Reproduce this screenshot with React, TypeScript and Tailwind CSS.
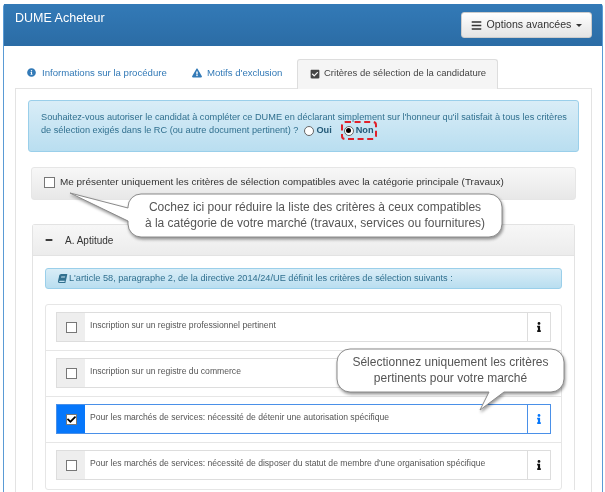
import { FaBars, FaBook, FaCheck, FaCheckSquare, FaExclamationTriangle, FaInfo, FaInfoCircle, FaMinus } from "react-icons/fa";

const criteres = [
  { label: "Inscription sur un registre professionnel pertinent", checked: false },
  { label: "Inscription sur un registre du commerce", checked: false },
  { label: "Pour les marchés de services: nécessité de détenir une autorisation spécifique", checked: true },
  { label: "Pour les marchés de services: nécessité de disposer du statut de membre d'une organisation spécifique", checked: false },
];

function CritereRow({ label, checked }: { label: string; checked: boolean }) {
  return (
    <div className="h-[46px] border-b border-[#e6e6e6] px-[10px] pt-[7px] last:border-b-0">
      <div className={`flex h-[30px] border ${checked ? "border-[#4a90e8]" : "border-[#dddddd]"}`}>
        <div className={`flex w-[28px] shrink-0 items-center justify-center ${checked ? "bg-[#0677fb]" : "bg-[#eeeeee]"}`}>
          <span className="flex h-[11px] w-[11px] items-center justify-center border border-[#777777] bg-white">
            {checked && <FaCheck className="text-[9px] text-black" />}
          </span>
        </div>
        <div className="flex-1 pb-[4px] pl-[5px] text-[8.6px] leading-[24px] text-[#555555]">{label}</div>
        <div className={`flex w-[23px] shrink-0 items-center justify-center border-l ${checked ? "border-[#4a90e8] text-[#0677fb]" : "border-[#dddddd] text-[#111111]"}`}>
          <FaInfo className="text-[10px]" />
        </div>
      </div>
    </div>
  );
}

function Callout({ className, bubble, children }: { className: string; bubble: string; children: React.ReactNode }) {
  return (
    <div className={`absolute flex flex-col items-center justify-center text-[12px] leading-[15.5px] text-[#555555] ${className}`}>
      <svg className="absolute left-0 top-0 overflow-visible" width="100%" height="100%">
        <path d={bubble} fill="#ffffff" stroke="#8a8a8a" strokeWidth="1" strokeLinejoin="round" style={{ filter: "drop-shadow(1px 2px 1.5px rgba(0,0,0,.4))" }} />
      </svg>
      <div className="relative text-center">{children}</div>
    </div>
  );
}

export default function App() {
  return (
    <div className="relative h-[492px] w-[605px] overflow-hidden bg-white pl-[3px] pr-[2px] pt-1 font-['Liberation_Sans',Arial,sans-serif] blur-[0.35px]">
      <div className="h-full rounded-t-[3px] border-x border-[#5a9bd5]">
        <div className="flex h-[42px] items-start justify-between bg-gradient-to-b from-[#337ab7] to-[#2b6ca5] pl-[11px] pr-[10px]">
          <div className="pt-[5px] text-[12.5px] leading-[18px] text-white">DUME Acheteur</div>
          <button className="mt-2 flex h-[26px] w-[131px] items-center justify-center gap-[5px] rounded-[3px] border border-[#cccccc] bg-gradient-to-b from-white to-[#e4e4e4] text-[10.6px] text-[#333333]">
            <FaBars className="text-[11px]" />
            <span>Options avancées</span>
            <span className="mt-[1px] h-0 w-0 border-x-[3px] border-t-[3px] border-x-transparent border-t-[#333333]" />
          </button>
        </div>

        <div className="pl-[11px] pr-[10px] pt-3">
          <div className="flex h-[30px] items-center whitespace-nowrap text-[9.6px] text-[#337ab7]">
            <div className="flex w-[167px] items-center gap-[6px] pl-3">
              <FaInfoCircle className="text-[9px]" /> Informations sur la procédure
            </div>
            <div className="flex w-[115px] items-center gap-[5px] pl-[10px]">
              <FaExclamationTriangle className="text-[10px]" /> Motifs d'exclusion
            </div>
            <div className="flex h-[30px] w-[201px] translate-y-[1px] items-center gap-1 rounded-t-[3px] border-x border-t border-[#dddddd] bg-[#f5f5f5] pb-[2px] pl-3 text-[9.5px] text-[#444444]">
              <FaCheckSquare className="text-[10px]" /> Critères de sélection de la candidature
            </div>
          </div>

          <div className="h-[420px] border-x border-t border-[#e3e3e3] pt-[11px]">
            <div className="mx-3 h-[52px] rounded-[3px] border border-[#9acfea] bg-gradient-to-b from-[#d9edf7] to-[#b9def0] px-3 pt-[10px] text-[9.2px] leading-[13px] text-[#31708f]">
              <div className="whitespace-nowrap">Souhaitez-vous autoriser le candidat à compléter ce DUME en déclarant simplement sur l'honneur qu'il satisfait à tous les critères</div>
              <div className="flex h-[13px] items-center whitespace-nowrap">
                <span>de sélection exigés dans le RC (ou autre document pertinent) ?</span>
                <span className="ml-[6px] h-[10px] w-[10px] rounded-full border border-[#666666] bg-white" />
                <b className="ml-[2px] text-[#245a78]">Oui</b>
                <span className="ml-[9px] flex h-[19px] items-center rounded-[4px] border-2 border-dashed border-[#e0202a] px-[1px]">
                  <span className="flex h-[10px] w-[10px] items-center justify-center rounded-full border border-[#666666] bg-white">
                    <span className="h-[5px] w-[5px] rounded-full bg-black" />
                  </span>
                  <b className="ml-[2px] text-[#245a78]">Non</b>
                </span>
              </div>
            </div>

            <div className="mx-[15px] mt-[15px] flex h-[33px] items-center gap-[5px] rounded-[3px] border border-[#e6e6e6] bg-gradient-to-b from-[#f7f7f7] to-[#e8e8e8] pb-[3px] pl-3 text-[9.95px] text-[#333333]">
              <span className="h-[11px] w-[11px] border border-[#777777] bg-white" />
              Me présenter uniquement les critères de sélection compatibles avec la catégorie principale (Travaux)
            </div>

            <div className="mx-4 mt-6 rounded-t-[3px] border-x border-t border-[#e3e3e3]">
              <div className="flex h-[31px] items-center border-b border-[#e3e3e3] bg-gradient-to-b from-[#f7f7f7] to-[#ececec] pl-3 text-[10px] text-[#333333]">
                <FaMinus className="w-[8px] text-[8px] text-black" />
                <span className="ml-[12px]">A. Aptitude</span>
              </div>
              <div className="px-3 pt-3">
                <div className="flex h-[21px] items-center gap-[2px] rounded-[3px] border border-[#9acfea] bg-gradient-to-b from-[#d9edf7] to-[#b9def0] pl-[12px] text-[9.2px] text-[#31708f]">
                  <FaBook className="h-[9px] w-[9px] -skew-x-12" />
                  L'article 58, paragraphe 2, de la directive 2014/24/UE définit les critères de sélection suivants :
                </div>
                <div className="mt-[15px] rounded-[3px] border border-[#e6e6e6]">
                  {criteres.map((c) => (
                    <CritereRow key={c.label} label={c.label} checked={c.checked} />
                  ))}
                </div>
              </div>
            </div>
          </div>
        </div>
      </div>

      <Callout
        className="left-[128px] top-[194px] h-[43px] w-[374px]"
        bubble="M13 0 H361 A13 13 0 0 1 374 13 V30 A13 13 0 0 1 361 43 H13 A13 13 0 0 1 0 30 V27 L-58 -1 L0 14 V13 A13 13 0 0 1 13 0 Z"
      >
        <div>Cochez ici pour réduire la liste des critères à ceux compatibles</div>
        <div>à la catégorie de votre marché (travaux, services ou fournitures)</div>
      </Callout>

      <Callout
        className="left-[337px] top-[349px] h-[43px] w-[227px]"
        bubble="M13 0 H214 A13 13 0 0 1 227 13 V30 A13 13 0 0 1 214 43 H167 L143 61 L152 43 H13 A13 13 0 0 1 0 30 V13 A13 13 0 0 1 13 0 Z"
      >
        <div>Sélectionnez uniquement les critères</div>
        <div>pertinents pour votre marché</div>
      </Callout>
    </div>
  );
}
